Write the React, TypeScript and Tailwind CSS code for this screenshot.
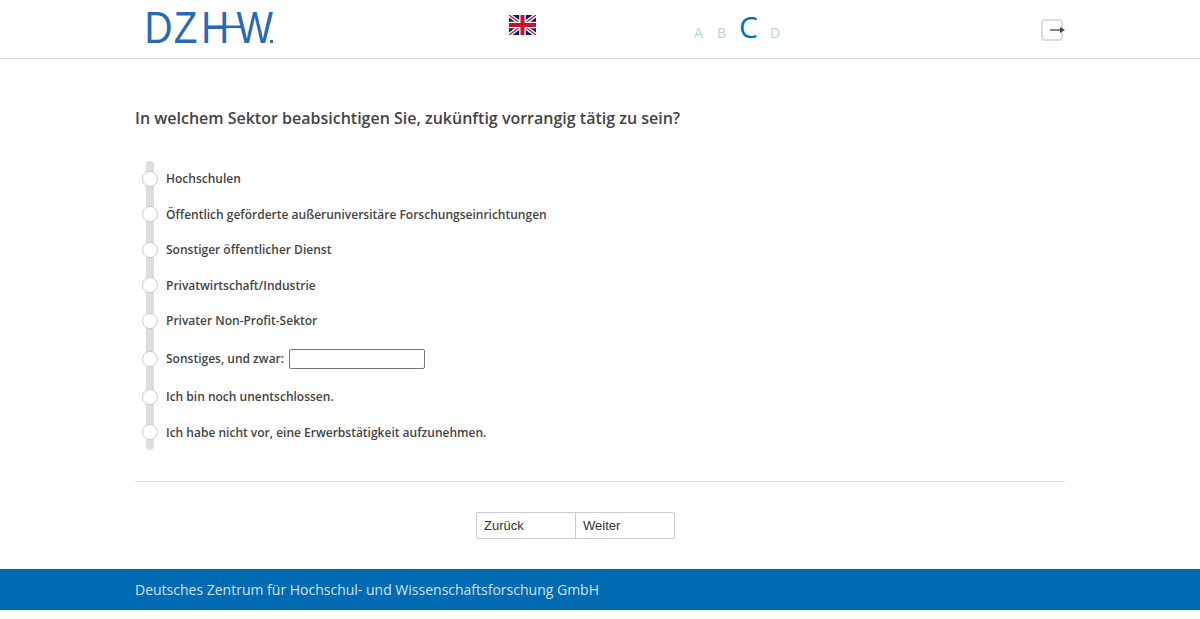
import React from "react";

const OPTIONS = [
  { label: "Hochschulen", h: "h-[35.5px]" },
  { label: "Öffentlich geförderte außeruniversitäre Forschungseinrichtungen", h: "h-[35.5px]" },
  { label: "Sonstiger öffentlicher Dienst", h: "h-[35.5px]" },
  { label: "Privatwirtschaft/Industrie", h: "h-[35.5px]" },
  { label: "Privater Non-Profit-Sektor", h: "h-[35.5px]" },
  { label: "Sonstiges, und zwar:", h: "h-[40.5px]", input: true },
  { label: "Ich bin noch unentschlossen.", h: "h-[35.5px]" },
  { label: "Ich habe nicht vor, eine Erwerbstätigkeit aufzunehmen.", h: "h-[35.5px]" },
];

function Flag() {
  return (
    <svg width="27" height="20" viewBox="0 0 27 20" className="block">
      <rect width="27" height="20" fill="#012169" />
      <path d="M0 0L27 20M27 0L0 20" stroke="#fff" strokeWidth="4" />
      <path d="M0 0L27 20M27 0L0 20" stroke="#c8102e" strokeWidth="1.4" />
      <path d="M13.5 0V20M0 10H27" stroke="#fff" strokeWidth="6.5" />
      <path d="M13.5 0V20M0 10H27" stroke="#c8102e" strokeWidth="4" />
    </svg>
  );
}

function Logo() {
  return (
    <svg width="134" height="56" viewBox="-4 0 134 56" className="block">
      <g transform="scale(0.86 1)">
        <text x="-4 30 62 103" y="43" fill="#2a6ab5" fontSize="45" fontFamily="'Liberation Sans', sans-serif">
          DZHW
        </text>
      </g>
      <rect x="122" y="40" width="3" height="3" fill="#2a6ab5" />
      <rect x="78" y="25.5" width="16" height="2.6" fill="#2a6ab5" />
    </svg>
  );
}

function ExitIcon() {
  return (
    <div className="relative h-[22px] w-[22px] rounded-[4px] border-2 border-[#dddddd]">
      <svg width="16" height="8" viewBox="0 0 16 8" className="absolute left-[7px] top-[5px]">
        <path d="M0 4H11" stroke="#444" strokeWidth="1.3" />
        <path d="M10 1L15 4L10 7Z" fill="#444" />
      </svg>
    </div>
  );
}

export default function App() {
  return (
    <div className="min-h-[619px] bg-white font-['Open_Sans',sans-serif] text-[#444444]">
      {/* Header */}
      <header className="h-[59px] border-b border-[#dddddd]">
        <div className="mx-auto flex h-[58px] w-[930px] items-start">
          <div className="ml-[9px] w-[365px]">
            <Logo />
          </div>
          <div className="mt-[15px] w-[185px]">
            <Flag />
          </div>
          <div className="mt-[9px] flex h-[36px] w-[347px] items-baseline text-[#0070ba]">
            <span className="w-[23px] text-[14px] opacity-30">A</span>
            <span className="w-[23px] text-[14px] opacity-30">B</span>
            <span className="-ml-[1px] w-[31px] text-[30px] leading-[36px]">C</span>
            <span className="text-[14px] opacity-30">D</span>
          </div>
          <div className="mt-[19px]">
            <ExitIcon />
          </div>
        </div>
      </header>

      <main className="mx-auto w-[930px]">
        <h1 className="mt-[47px] text-[16px] font-semibold leading-[24px]">
          In welchem Sektor beabsichtigen Sie, zukünftig vorrangig tätig zu sein?
        </h1>

        {/* Options */}
        <div className="relative mt-[31.25px] w-full">
          <div className="absolute left-[11px] top-0 h-[289px] w-[8px] rounded bg-[#dddddd]" />
          <div className="relative">
            {OPTIONS.map((o) => (
              <div key={o.label} className={`flex items-center ${o.h}`}>
                <span className="mb-[0.5px] ml-[7px] h-[16px] w-[16px] shrink-0 rounded-full border border-[#cccccc] bg-white" />
                <span className="ml-[8px] text-[12px] font-semibold">{o.label}</span>
                {o.input && (
                  <input
                    type="text"
                    className="ml-[5px] h-[20px] w-[136px] rounded-[2px] border border-[#767676] bg-white"
                  />
                )}
              </div>
            ))}
          </div>
        </div>

        <div className="mt-[30.75px] border-t border-[#dddddd]" />

        {/* Nav buttons */}
        <div className="ml-[341px] mt-[30px] flex h-[27px] w-[199px] rounded-[2px] border border-[#cccccc] font-['Liberation_Sans',sans-serif] text-[13px] text-[#333333]">
          <button className="w-[99px] border-r border-[#cccccc] pl-[7px] text-left">Zurück</button>
          <button className="flex-1 pl-[7px] text-left">Weiter</button>
        </div>
      </main>

      {/* Footer */}
      <footer className="mt-[30px] h-[41px] bg-[#006ab3]">
        <div className="mx-auto w-[930px] text-[14px] leading-[41px] text-[#cfe3f2]">
          Deutsches Zentrum für Hochschul- und Wissenschaftsforschung GmbH
        </div>
      </footer>
    </div>
  );
}
